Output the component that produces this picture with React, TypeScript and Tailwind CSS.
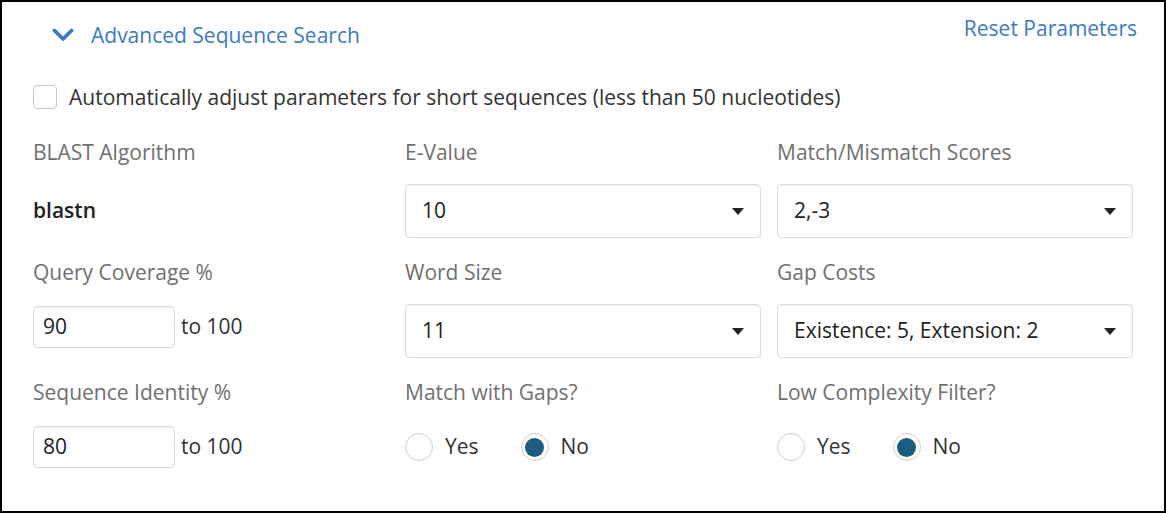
import React from "react";

const font = { fontFamily: '"Open Sans", "Noto Sans", sans-serif' };

function Chevron() {
  return (
    <svg width="22" height="14" viewBox="0 0 22 14" className="text-[#3b7bc0]">
      <path d="M2.5 2.5 L11 11 L19.5 2.5" fill="none" stroke="currentColor" strokeWidth="3.8" strokeLinecap="round" strokeLinejoin="round" />
    </svg>
  );
}

function Select({ value }: { value: string }) {
  return (
    <div className="flex h-[54px] w-full items-center justify-between rounded-[4px] border border-[#dcdcdc] bg-white pl-4 pr-[16px] text-[21px] text-[#222] shadow-[inset_0_1px_2px_rgba(0,0,0,0.06)]">
      <span>{value}</span>
      <svg width="12" height="7" viewBox="0 0 12 7">
        <path d="M0 0 L12 0 L6 7 Z" fill="#222" />
      </svg>
    </div>
  );
}

function RangeInput({ value }: { value: string }) {
  return (
    <div className="flex items-center gap-[6px] pt-[2px]">
      <div className="flex h-[42px] w-[142px] items-center rounded-[4px] border border-[#dcdcdc] bg-white pl-[9px] text-[21px] text-[#222] shadow-[inset_0_1px_2px_rgba(0,0,0,0.06)]">
        {value}
      </div>
      <span className="text-[21px] text-[#333]">to 100</span>
    </div>
  );
}

function Radio({ checked, label }: { checked?: boolean; label: string }) {
  return (
    <div className="flex items-center gap-[12px]">
      <span className="flex h-[28px] w-[28px] items-center justify-center rounded-full border-[1.5px] border-[#cfcfcf] bg-white">
        {checked && <span className="h-[19px] w-[19px] rounded-full bg-[#1b5c80]" />}
      </span>
      <span className="text-[21px] text-[#333]">{label}</span>
    </div>
  );
}

function Field({ label, children }: { label: string; children: React.ReactNode }) {
  return (
    <div className="flex flex-col">
      <div className="h-[28px] text-[21px] leading-[28px] text-[#707070]">{label}</div>
      <div className="mt-[18px] h-[54px]">{children}</div>
    </div>
  );
}

export default function App() {
  return (
    <div style={font} className="h-[513px] w-[1166px] border-2 border-black bg-white">
      {/* Header */}
      <div className="flex items-start justify-between pr-[27px] pt-[12px]">
        <div className="flex items-center pl-[50px] pt-[7px]">
          <Chevron />
          <span className="ml-[17px] text-[21px] leading-[28px] text-[#3b7bc0]">Advanced Sequence Search</span>
        </div>
        <span className="text-[21px] leading-[28px] text-[#3b7bc0]">Reset Parameters</span>
      </div>

      {/* Auto-adjust checkbox */}
      <div className="mt-[34px] flex items-center gap-[12px] pl-[31px]">
        <span className="h-[24px] w-[24px] rounded-[4px] border border-[#c8c8c8] bg-white" />
        <span className="text-[21px] leading-[28px] text-[#333]">
          Automatically adjust parameters for short sequences (less than 50 nucleotides)
        </span>
      </div>

      {/* Parameters grid */}
      <div className="mt-[27px] grid grid-cols-[356px_356px_356px] gap-x-4 gap-y-5 pl-[31px]">
        <Field label="BLAST Algorithm">
          <div className="flex h-full items-center text-[21px] font-semibold text-[#222]">blastn</div>
        </Field>
        <Field label="E-Value">
          <Select value="10" />
        </Field>
        <Field label="Match/Mismatch Scores">
          <Select value="2,-3" />
        </Field>

        <Field label="Query Coverage %">
          <RangeInput value="90" />
        </Field>
        <Field label="Word Size">
          <Select value="11" />
        </Field>
        <Field label="Gap Costs">
          <Select value="Existence: 5, Extension: 2" />
        </Field>

        <Field label="Sequence Identity %">
          <RangeInput value="80" />
        </Field>
        <Field label="Match with Gaps?">
          <div className="flex h-[46px] items-center gap-[42px]">
            <Radio label="Yes" />
            <Radio checked label="No" />
          </div>
        </Field>
        <Field label="Low Complexity Filter?">
          <div className="flex h-[46px] items-center gap-[42px]">
            <Radio label="Yes" />
            <Radio checked label="No" />
          </div>
        </Field>
      </div>
    </div>
  );
}
